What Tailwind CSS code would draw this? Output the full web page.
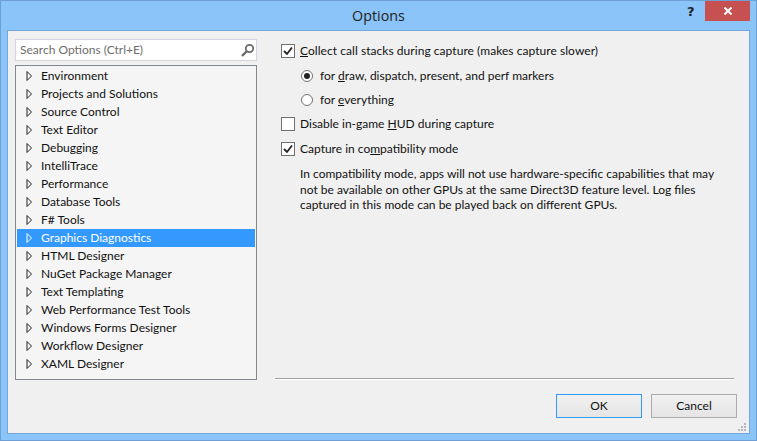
<!DOCTYPE html>
<html lang="en">
  <head>
    <meta charset="UTF-8" />
    <title>Options</title>
    <script src="https://cdn.jsdelivr.net/npm/@tailwindcss/browser@4"></script>
  </head>
  <body class="w-[757px] h-[441px] overflow-hidden bg-[#8ac4f8] font-['Lato',sans-serif] text-[12px] text-[#111]">
    <div class="h-[441px] flex flex-col border border-[#6f9fd4] px-[6px] pb-[6px]">
      <!-- title bar -->
      <div class="h-[29px] shrink-0 relative flex items-center justify-center font-['Open_Sans',sans-serif] text-[14.3px] text-[#222]">
        Options
        <span class="absolute left-[680px] top-[1px] font-['DejaVu_Sans',sans-serif] text-[13px] font-bold text-[#222]">?</span>
        <div class="absolute left-[698px] top-0 w-[45px] h-[20px] bg-[#c75050] flex items-center justify-center">
          <svg width="8" height="8" viewBox="0 0 8 8"><path d="M.5 .5 L7.5 7.5 M7.5 .5 L.5 7.5" stroke="#fff" stroke-width="2" /></svg>
        </div>
      </div>
      <div class="relative flex-1 bg-[#f0f0f0] border border-[#74a6d8] flex flex-col pt-[8px]">
        <div class="flex h-[341px] shrink-0">
          <!-- left column -->
          <div class="w-[242px] ml-[7px] shrink-0 flex flex-col">
            <div class="h-[22px] bg-white border border-[#d3d3e3] flex items-center justify-between pl-[4px] pr-[1px] text-[#6d6d6d]">
              <span>Search Options (Ctrl+E)</span>
              <svg width="15" height="15" viewBox="0 0 15 15"><circle cx="9.5" cy="5.5" r="3.7" fill="none" stroke="#6a6a6a" stroke-width="1.8" /><path d="M6.5 8.5 L2 13" stroke="#6a6a6a" stroke-width="2.4" /></svg>
            </div>
            <ul class="mt-[4px] h-[315px] bg-[#f5f5f5] border border-[#828790] p-[1px]">
              <li class="h-[18px] flex items-center"><svg class="ml-[9px] mr-[8px]" width="7" height="10" viewBox="0 0 7 10"><path d="M1 .5 L5.5 5 L1 9.5 Z" fill="none" stroke="#222" /></svg>Environment</li>
              <li class="h-[18px] flex items-center"><svg class="ml-[9px] mr-[8px]" width="7" height="10" viewBox="0 0 7 10"><path d="M1 .5 L5.5 5 L1 9.5 Z" fill="none" stroke="#222" /></svg>Projects and Solutions</li>
              <li class="h-[18px] flex items-center"><svg class="ml-[9px] mr-[8px]" width="7" height="10" viewBox="0 0 7 10"><path d="M1 .5 L5.5 5 L1 9.5 Z" fill="none" stroke="#222" /></svg>Source Control</li>
              <li class="h-[18px] flex items-center"><svg class="ml-[9px] mr-[8px]" width="7" height="10" viewBox="0 0 7 10"><path d="M1 .5 L5.5 5 L1 9.5 Z" fill="none" stroke="#222" /></svg>Text Editor</li>
              <li class="h-[18px] flex items-center"><svg class="ml-[9px] mr-[8px]" width="7" height="10" viewBox="0 0 7 10"><path d="M1 .5 L5.5 5 L1 9.5 Z" fill="none" stroke="#222" /></svg>Debugging</li>
              <li class="h-[18px] flex items-center"><svg class="ml-[9px] mr-[8px]" width="7" height="10" viewBox="0 0 7 10"><path d="M1 .5 L5.5 5 L1 9.5 Z" fill="none" stroke="#222" /></svg>IntelliTrace</li>
              <li class="h-[18px] flex items-center"><svg class="ml-[9px] mr-[8px]" width="7" height="10" viewBox="0 0 7 10"><path d="M1 .5 L5.5 5 L1 9.5 Z" fill="none" stroke="#222" /></svg>Performance</li>
              <li class="h-[18px] flex items-center"><svg class="ml-[9px] mr-[8px]" width="7" height="10" viewBox="0 0 7 10"><path d="M1 .5 L5.5 5 L1 9.5 Z" fill="none" stroke="#222" /></svg>Database Tools</li>
              <li class="h-[18px] flex items-center"><svg class="ml-[9px] mr-[8px]" width="7" height="10" viewBox="0 0 7 10"><path d="M1 .5 L5.5 5 L1 9.5 Z" fill="none" stroke="#222" /></svg>F# Tools</li>
              <li class="h-[18px] flex items-center bg-[#3399ff] text-white"><svg class="ml-[9px] mr-[8px]" width="7" height="10" viewBox="0 0 7 10"><path d="M1 .5 L5.5 5 L1 9.5 Z" fill="none" stroke="#fff" /></svg>Graphics Diagnostics</li>
              <li class="h-[18px] flex items-center"><svg class="ml-[9px] mr-[8px]" width="7" height="10" viewBox="0 0 7 10"><path d="M1 .5 L5.5 5 L1 9.5 Z" fill="none" stroke="#222" /></svg>HTML Designer</li>
              <li class="h-[18px] flex items-center"><svg class="ml-[9px] mr-[8px]" width="7" height="10" viewBox="0 0 7 10"><path d="M1 .5 L5.5 5 L1 9.5 Z" fill="none" stroke="#222" /></svg>NuGet Package Manager</li>
              <li class="h-[18px] flex items-center"><svg class="ml-[9px] mr-[8px]" width="7" height="10" viewBox="0 0 7 10"><path d="M1 .5 L5.5 5 L1 9.5 Z" fill="none" stroke="#222" /></svg>Text Templating</li>
              <li class="h-[18px] flex items-center"><svg class="ml-[9px] mr-[8px]" width="7" height="10" viewBox="0 0 7 10"><path d="M1 .5 L5.5 5 L1 9.5 Z" fill="none" stroke="#222" /></svg>Web Performance Test Tools</li>
              <li class="h-[18px] flex items-center"><svg class="ml-[9px] mr-[8px]" width="7" height="10" viewBox="0 0 7 10"><path d="M1 .5 L5.5 5 L1 9.5 Z" fill="none" stroke="#222" /></svg>Windows Forms Designer</li>
              <li class="h-[18px] flex items-center"><svg class="ml-[9px] mr-[8px]" width="7" height="10" viewBox="0 0 7 10"><path d="M1 .5 L5.5 5 L1 9.5 Z" fill="none" stroke="#222" /></svg>Workflow Designer</li>
              <li class="h-[18px] flex items-center"><svg class="ml-[9px] mr-[8px]" width="7" height="10" viewBox="0 0 7 10"><path d="M1 .5 L5.5 5 L1 9.5 Z" fill="none" stroke="#222" /></svg>XAML Designer</li>
            </ul>
          </div>
          <!-- right column -->
          <div class="ml-[18px] w-[459px] flex flex-col">
            <div class="flex-1 pl-[6px]">
              <label class="h-[24px] flex items-center gap-[5px]"><span class="w-[14px] h-[14px] bg-white border border-[#707070] flex items-center justify-center"><svg width="12" height="12" viewBox="0 0 12 12"><path d="M2 6 L5 9 L10 2.5" fill="none" stroke="#222" stroke-width="1.8" /></svg></span><span class="tracking-[0.05px]"><u>C</u>ollect call stacks during capture (makes capture slower)</span></label>
              <label class="h-[24px] mt-[1px] ml-[20px] flex items-center gap-[7px]"><span class="w-[12px] h-[12px] rounded-full bg-white border border-[#707070] flex items-center justify-center"><span class="w-[6px] h-[6px] rounded-full bg-[#222]"></span></span><span>for <u>d</u>raw, dispatch, present, and perf markers</span></label>
              <label class="h-[24px] ml-[20px] flex items-center gap-[7px]"><span class="w-[12px] h-[12px] rounded-full bg-white border border-[#707070]"></span><span>for <u>e</u>verything</span></label>
              <label class="h-[24px] flex items-center gap-[5px]"><span class="w-[14px] h-[14px] bg-white border border-[#707070]"></span><span>Disable in-game <u>H</u>UD during capture</span></label>
              <label class="h-[24px] mt-[1px] flex items-center gap-[5px]"><span class="w-[14px] h-[14px] bg-white border border-[#707070] flex items-center justify-center"><svg width="12" height="12" viewBox="0 0 12 12"><path d="M2 6 L5 9 L10 2.5" fill="none" stroke="#222" stroke-width="1.8" /></svg></span><span>Capture in co<u>m</u>patibility mode</span></label>
              <p class="ml-[19px] mt-[5px] leading-[15.7px] w-[425px]">In compatibility mode, apps will not use hardware-specific capabilities that may not be available on other GPUs at the same Direct3D feature level. Log files captured in this mode can be played back on different GPUs.</p>
            </div>
            <div class="h-px bg-[#a0a0a0] mb-[1px] shadow-[0_1px_0_#fff]"></div>
          </div>
        </div>
        <!-- footer -->
        <div class="flex justify-end gap-[9px] pr-[12px] pt-[14px]">
          <button class="w-[86px] h-[24px] bg-linear-to-b from-[#f0f0f0] to-[#e5e5e5] border border-[#3399ff] text-[#111]">OK</button>
          <button class="w-[86px] h-[24px] bg-linear-to-b from-[#f0f0f0] to-[#e5e5e5] border border-[#acacac] text-[#111]">Cancel</button>
        </div>
        <svg class="absolute right-[3px] bottom-[2px]" width="8" height="8" viewBox="0 0 8 8" fill="#b8b8b8"><rect x="6" y="0" width="2" height="2" /><rect x="3" y="3" width="2" height="2" /><rect x="6" y="3" width="2" height="2" /><rect x="0" y="6" width="2" height="2" /><rect x="3" y="6" width="2" height="2" /><rect x="6" y="6" width="2" height="2" /></svg>
      </div>
    </div>
  </body>
</html>
